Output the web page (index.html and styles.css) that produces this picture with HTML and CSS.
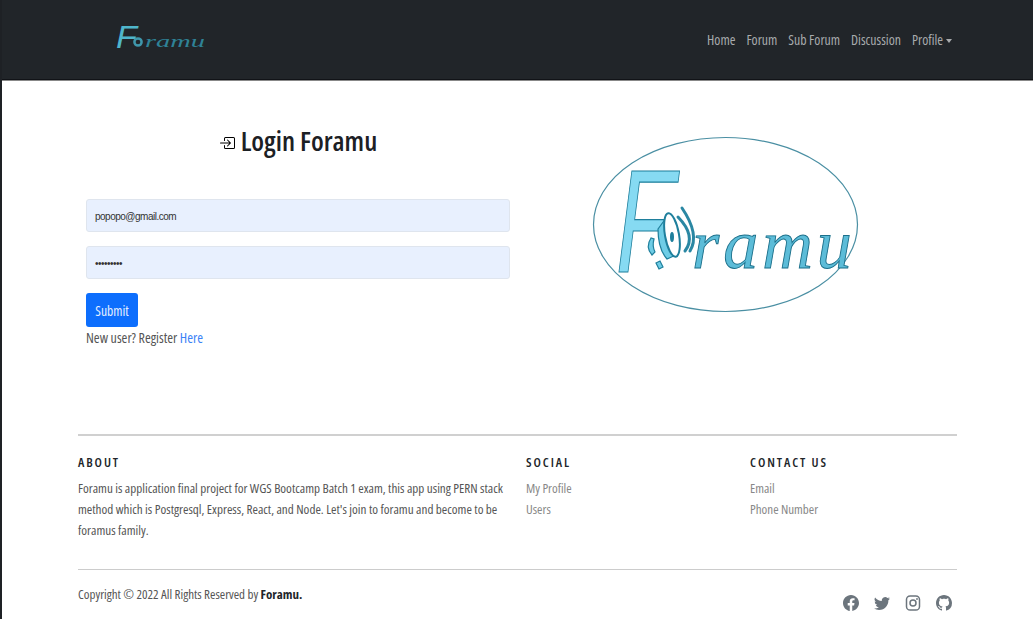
FILE: index.html
```html
<!DOCTYPE html>
<html lang="en">
<head>
<meta charset="utf-8">
<title>Login Foramu</title>
<link rel="stylesheet" href="styles.css">
</head>
<body>
<nav class="navbar">
  <a class="brand" href="#">
    <svg class="brand-logo" viewBox="0 0 92 44" width="92" height="44" aria-label="Foramu">
      <text class="bl-f" x="0" y="30" textLength="21" lengthAdjust="spacingAndGlyphs">F</text>
      <circle class="bl-o" cx="22" cy="24" r="3.6"/>
      <text class="bl-r" x="29" y="29" textLength="60" lengthAdjust="spacingAndGlyphs">ramu</text>
    </svg>
  </a>
  <ul class="nav-links">
    <li><a href="#">Home</a></li>
    <li><a href="#">Forum</a></li>
    <li><a href="#">Sub Forum</a></li>
    <li><a href="#">Discussion</a></li>
    <li><a href="#" class="dropdown">Profile<span class="caret"></span></a></li>
  </ul>
</nav>

<main class="login">
  <section class="login-form">
    <h1 class="title">
      <svg class="title-icon" viewBox="0 0 16 16" width="16" height="16"><path d="M6 3.5a.5.5 0 0 1 .5-.5h8a.5.5 0 0 1 .5.5v9a.5.5 0 0 1-.5.5h-8a.5.5 0 0 1-.5-.5v-2a.5.5 0 0 0-1 0v2A1.5 1.5 0 0 0 6.5 14h8a1.5 1.5 0 0 0 1.5-1.5v-9A1.5 1.5 0 0 0 14.5 2h-8A1.5 1.5 0 0 0 5 3.5v2a.5.5 0 0 0 1 0v-2z"/><path d="M11.854 8.354a.5.5 0 0 0 0-.708l-3-3a.5.5 0 1 0-.708.708L10.293 7.5H1.5a.5.5 0 0 0 0 1h8.793l-2.147 2.146a.5.5 0 0 0 .708.708l3-3z"/></svg>
      Login Foramu
    </h1>
    <form class="form">
      <input class="field" type="email" value="popopo@gmail.com">
      <input class="field" type="password" value="popopopop">
      <button class="submit" type="button">Submit</button>
      <p class="register">New user? Register <a href="#">Here</a></p>
    </form>
  </section>
  <section class="login-art">
    <svg class="logo" viewBox="0 0 265 175" width="265" height="175" aria-label="Foramu">
      <ellipse class="logo-ring" cx="132.500" cy="87.500" rx="132" ry="87"/>
      <text class="logo-f" x="23" y="135" textLength="59" lengthAdjust="spacingAndGlyphs">F</text>
      <g class="speaker">
        <path d="M65 92 L76 77 L83 118 L74 122 Q65 112 65 92Z"/>
        <ellipse class="bell" cx="79" cy="98" rx="7" ry="22" transform="rotate(-10 79 98)"/>
        <ellipse class="core" cx="79" cy="100" rx="2" ry="5"/>
        <path d="M58 101 Q52 110 59 118 L62 115 Q59 109 61 102Z"/>
        <path d="M63 126 L67 124 L70 130 L66 132Z"/>
        <path class="wave" d="M85 80 Q103.500 99 92 114"/>
        <path class="wave" d="M89 71 Q107 97.500 97 114"/>
      </g>
      <text class="logo-r" x="99" y="131">ramu</text>
    </svg>
  </section>
</main>

<footer class="footer">
  <div class="footer-cols">
    <div class="col-about">
      <h2>About</h2>
      <p>Foramu is application final project for WGS Bootcamp Batch 1 exam, this app using PERN stack method which is Postgresql, Express, React, and Node. Let's join to foramu and become to be foramus family.</p>
    </div>
    <div class="col-links">
      <h2>Social</h2>
      <ul><li><a href="#">My Profile</a></li><li><a href="#">Users</a></li></ul>
    </div>
    <div class="col-links">
      <h2>Contact Us</h2>
      <ul><li><a href="#">Email</a></li><li><a href="#">Phone Number</a></li></ul>
    </div>
  </div>
  <div class="footer-bottom">
    <p class="copyright">Copyright © 2022 All Rights Reserved by <strong>Foramu.</strong></p>
    <div class="socials">
      <svg viewBox="0 0 16 16" width="16" height="16"><path d="M16 8.049c0-4.446-3.582-8.05-8-8.05C3.58 0-.002 3.603-.002 8.05c0 4.017 2.926 7.347 6.75 7.951v-5.625h-2.03V8.05H6.75V6.275c0-2.017 1.195-3.131 3.022-3.131.876 0 1.791.157 1.791.157v1.98h-1.009c-.993 0-1.303.621-1.303 1.258v1.51h2.218l-.354 2.326H9.25V16c3.824-.604 6.75-3.934 6.75-7.951z"/></svg>
      <svg viewBox="0 0 16 16" width="16" height="16"><path d="M5.026 15c6.038 0 9.341-5.003 9.341-9.334 0-.14 0-.282-.006-.422A6.685 6.685 0 0 0 16 3.542a6.658 6.658 0 0 1-1.889.518 3.301 3.301 0 0 0 1.447-1.817 6.533 6.533 0 0 1-2.087.793A3.286 3.286 0 0 0 7.875 6.03a9.325 9.325 0 0 1-6.767-3.429 3.289 3.289 0 0 0 1.018 4.382A3.323 3.323 0 0 1 .64 6.575v.045a3.288 3.288 0 0 0 2.632 3.218 3.203 3.203 0 0 1-.865.115 3.23 3.23 0 0 1-.614-.057 3.283 3.283 0 0 0 3.067 2.277A6.588 6.588 0 0 1 .78 13.58a6.32 6.32 0 0 1-.78-.045A9.344 9.344 0 0 0 5.026 15z"/></svg>
      <svg class="ig" viewBox="0 0 16 16" width="16" height="16"><rect x="1.500" y="1" width="13" height="14" rx="3.600"/><circle cx="8" cy="8" r="3"/><circle class="dot" cx="12" cy="4" r=".9"/></svg>
      <svg viewBox="0 0 16 16" width="16" height="16"><path d="M8 0C3.58 0 0 3.58 0 8c0 3.54 2.29 6.53 5.47 7.59.4.07.55-.17.55-.38 0-.19-.01-.82-.01-1.49-2.01.37-2.53-.49-2.69-.94-.09-.23-.48-.94-.82-1.13-.28-.15-.68-.52-.01-.53.63-.01 1.08.58 1.23.82.72 1.21 1.87.87 2.33.66.07-.52.28-.87.51-1.07-1.78-.2-3.64-.89-3.64-3.95 0-.87.31-1.59.82-2.15-.08-.2-.36-1.02.08-2.12 0 0 .67-.21 2.2.82.64-.18 1.32-.27 2-.27.68 0 1.36.09 2 .27 1.53-1.04 2.2-.82 2.2-.82.44 1.1.16 1.92.08 2.12.51.56.82 1.27.82 2.15 0 3.07-1.87 3.75-3.65 3.95.29.25.54.73.54 1.48 0 1.07-.01 1.93-.01 2.2 0 .21.15.46.55.38A8.012 8.012 0 0 0 16 8c0-4.42-3.58-8-8-8z"/></svg>
    </div>
  </div>
</footer>
</body>
</html>
```

FILE: styles.css
```css
* { box-sizing: border-box; }
html, body { height: 100%; }
body {
  margin: 0;
  height: 619px;
  overflow: hidden;
  background: #fff;
  border-left: 2px solid #1e2125;
  color: #212529;
  font-family: "Open Sans", "Liberation Sans", sans-serif;
  font-stretch: 75%;
  font-size: 13px;
}
a { text-decoration: none; color: inherit; }
ul { list-style: none; margin: 0; padding: 0; }

.navbar {
  margin-left: -2px;
  height: 80px;
  background: #212529;
  border-bottom: 1px solid #111317;
  box-shadow: 0 1px 0 #888;
  display: flex;
  align-items: center;
  justify-content: space-between;
  padding: 0 81px 0 116px;
}
.brand { display: flex; }
.brand-logo { display: block; }
.bl-f { font: italic 32px "Liberation Sans", sans-serif; fill: #4fb6cb; }
.bl-o { fill: none; stroke: #3f97ab; stroke-width: 2.500; }
.bl-r { font: italic 17px "Liberation Serif", serif; fill: #2f8296; }
.nav-links { display: flex; gap: 11px; color: #a8abad; font-size: 13.800px; }
.caret {
  display: inline-block;
  margin-left: 3px;
  vertical-align: 2px;
  border-top: 4px solid currentColor;
  border-left: 3.500px solid transparent;
  border-right: 3.500px solid transparent;
}

.login {
  display: flex;
  height: 354px;
  padding: 0 0 0 84px;
}
.login-form { width: 424px; }
.title {
  margin: 44px 0 0;
  height: 75px;
  display: flex;
  justify-content: center;
  align-items: flex-start;
  gap: 6px;
  font-size: 27.500px;
  font-weight: 600;
  line-height: 34px;
  color: #1c2024;
}
.title-icon { margin-top: 11px; }
.form { display: flex; flex-direction: column; }
.field {
  height: 33px;
  margin-bottom: 14px;
  padding: 2px 8px 0;
  border: 1px solid #dfe5ee;
  border-radius: 3px;
  background: #e8f0fe;
  color: #333;
  font: 10px "Liberation Sans", sans-serif;
  letter-spacing: -.5px;
}
.submit {
  align-self: flex-start;
  width: 52px;
  height: 34px;
  border: 0;
  border-radius: 3px;
  background: #0d6efd;
  color: #e6efff;
  font: inherit;
  font-stretch: 75%;
  font-size: 13.600px;
  padding: 0;
}
.register { margin: 2px 0 0; color: #555; font-size: 14px; line-height: 17px; }
.register a { color: #3b82f6; }

.login-art { margin: 57px 0 0 83px; }
.logo { display: block; overflow: visible; }
.logo-ring { fill: none; stroke: #4a8fa3; stroke-width: 1.200; }
.logo-f {
  font: italic 147px "Liberation Sans", sans-serif;
  fill: #86daf2;
  stroke: #1f7f9c;
  stroke-width: 1.200;
}
.logo-r {
  font: italic 70px "Liberation Serif", serif;
  fill: #5cbcd8;
  stroke: #1b6f8a;
  stroke-width: .9;
  letter-spacing: 4px;
}
.speaker path { fill: #6fcde6; stroke: #1f7f9c; stroke-width: 1.200; }
.speaker .bell { fill: #fff; stroke: #1f7f9c; stroke-width: 2; }
.speaker .core { fill: #1f7f9c; }
.speaker .wave { fill: none; stroke: #2a87a3; stroke-width: 3; stroke-linecap: round; }

.footer { padding: 0 76px; color: #555; }
.footer-cols {
  display: flex;
  height: 135px;
  border-top: 2px solid #d0d0d0;
  padding-top: 19px;
}
.footer h2 {
  margin: 0 0 8px;
  font-size: 13px;
  font-weight: 600;
  line-height: 15px;
  letter-spacing: 1.900px;
  text-transform: uppercase;
  color: #212529;
}
.col-about { flex: none; width: 448px; padding-right: 20px; }
.col-about p { margin: 0; line-height: 21px; font-size: 13.150px; }
.col-links { flex: none; width: 224px; }
.col-links li { line-height: 21px; color: #888; }
.footer-bottom {
  display: flex;
  justify-content: space-between;
  border-top: 1px solid #ccc;
  padding-top: 16px;
}
.copyright { margin: 0; line-height: 17px; }
.copyright strong { color: #212529; }
.socials { display: flex; gap: 15px; padding: 9px 5px 0 0; }
.socials svg { fill: #6c757d; }
.socials .ig { fill: none; stroke: #6c757d; stroke-width: 1.500; }
.socials .ig .dot { fill: #6c757d; stroke: none; }
```
